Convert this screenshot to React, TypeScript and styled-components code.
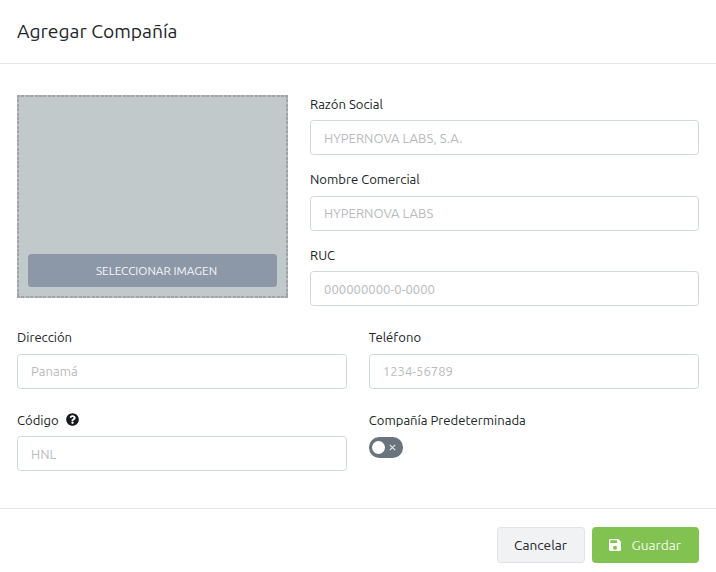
import React from "react";
import styled, { createGlobalStyle } from "styled-components";

const GlobalStyle = createGlobalStyle`
  *, *::before, *::after { box-sizing: border-box; }
  body {
    margin: 0;
    background: #fff;
    color: #212529;
    font-family: Ubuntu, "Noto Sans", sans-serif;
    font-size: 13.1px;
  }
  button, input { font: inherit; }
`;

const Dialog = styled.form`
  display: flex;
  flex-direction: column;
  height: 572px;
  overflow: hidden;
`;

const Header = styled.header`
  height: 64px;
  padding: 19px 17px 0;
  border-bottom: 1px solid #e6e7e8;
`;

const Title = styled.h1`
  margin: 0;
  font-size: 19.25px;
  font-weight: 400;
  line-height: 24px;
`;

const Body = styled.main`
  flex: 1;
  padding: 30.7px 17.5px 0 17px;
`;

const TopSection = styled.section`
  display: grid;
  grid-template-columns: 271px 1fr;
  column-gap: 22px;
`;

const FieldStack = styled.div`
  display: grid;
  row-gap: 15px;
`;

const FieldGrid = styled.section`
  display: grid;
  grid-template-columns: 1fr 1fr;
  gap: 21.9px 22px;
  margin-top: 22.2px;
`;

const dashX = "repeating-linear-gradient(90deg, #a0a5a7 0 3px, #bbc1c3 3px 4.4px)";
const dashY = "repeating-linear-gradient(180deg, #a0a5a7 0 3px, #bbc1c3 3px 4.4px)";

const ImageDrop = styled.div`
  display: flex;
  align-items: flex-end;
  height: 203px;
  padding: 11px;
  background:
    ${dashX} top / 100% 2px no-repeat,
    ${dashX} bottom / 100% 2px no-repeat,
    ${dashY} left / 2px 100% no-repeat,
    ${dashY} right / 2px 100% no-repeat,
    #c2c9cb;
`;

const SelectImage = styled.button`
  flex: 1;
  height: 33px;
  padding: 0 0 0 8px;
  border: 0;
  border-radius: 3.5px;
  background: #8c97a8;
  color: #f5f7f9;
  font-size: 11.75px;
`;

const FieldBox = styled.div`
  display: flex;
  flex-direction: column;
  gap: 7.5px;
`;

const Label = styled.label`
  display: flex;
  align-items: center;
  gap: 7px;
  height: 18px;
  line-height: 18px;
`;

const Input = styled.input`
  width: 100%;
  height: 35px;
  padding: 0 13px;
  border: 1px solid #d0d9da;
  border-radius: 3.5px;
  background: #fff;
  color: #212529;
  outline: 0;

  &::placeholder { color: #b9bbbc; opacity: 1; }
`;

const Switch = styled.button`
  display: flex;
  align-items: center;
  gap: 4px;
  width: 34.5px;
  height: 20.5px;
  margin-top: 1px;
  padding: 0 3px;
  border: 0;
  border-radius: 10.25px;
  background: #69747e;
`;

const Knob = styled.span`
  width: 13px;
  height: 13px;
  border-radius: 50%;
  background: #fff;
`;

const Footer = styled.footer`
  display: flex;
  justify-content: flex-end;
  gap: 7px;
  height: 64px;
  padding: 18px 17.5px 0;
  border-top: 1px solid #e8e9ea;
`;

const Action = styled.button<{ $primary?: boolean }>`
  display: flex;
  align-items: center;
  justify-content: center;
  gap: 10.5px;
  width: ${(p) => (p.$primary ? 107 : 88)}px;
  height: 36px;
  padding: 0;
  border: 1px solid ${(p) => (p.$primary ? "#82c250" : "#e1e3e6")};
  border-radius: 3.5px;
  background: ${(p) => (p.$primary ? "#82c250" : "#f1f2f4")};
  color: ${(p) => (p.$primary ? "#f4faef" : "#212529")};
  font-size: 13.7px;
`;

const HelpIcon = () => (
  <svg width="13" height="13" viewBox="0 0 512 512" fill="#17191c" aria-hidden="true">
    <path d="M504 256c0 136.997-111.043 248-248 248S8 392.997 8 256C8 119.083 119.043 8 256 8s248 111.083 248 248zM262.655 90c-54.497 0-89.255 22.957-116.549 63.758-3.536 5.286-2.353 12.415 2.715 16.258l34.699 26.31c5.205 3.947 12.621 3.008 16.665-2.122 17.864-22.658 30.113-35.797 57.303-35.797 20.429 0 45.698 13.148 45.698 32.958 0 14.976-12.363 22.667-32.534 33.976C247.128 238.528 216 254.941 216 296v4c0 6.627 5.373 12 12 12h56c6.627 0 12-5.373 12-12v-1.333c0-28.462 83.186-29.647 83.186-106.667 0-58.002-60.165-102-116.531-102zM256 338c-25.365 0-46 20.635-46 46 0 25.364 20.635 46 46 46s46-20.636 46-46c0-25.365-20.635-46-46-46z" />
  </svg>
);

const SaveIcon = () => (
  <svg width="12" height="12" viewBox="3 3 18 18" fill="#fff" aria-hidden="true">
    <path d="M17 3H5a2 2 0 0 0-2 2v14a2 2 0 0 0 2 2h14a2 2 0 0 0 2-2V7l-4-4zm-5 16a3 3 0 1 1 0-6 3 3 0 0 1 0 6zm3-10H5V5h10v4z" />
  </svg>
);

const CrossIcon = () => (
  <svg width="7" height="7" viewBox="0 0 7 7" stroke="#e4e8eb" strokeWidth="1.15" aria-hidden="true">
    <path d="M.8.8l5.4 5.4M6.2.8L.8 6.2" />
  </svg>
);

interface FieldProps {
  id: string;
  label: string;
  placeholder: string;
  help?: boolean;
}

const Field = ({ id, label, placeholder, help }: FieldProps) => (
  <FieldBox>
    <Label htmlFor={id}>
      {label}
      {help && <HelpIcon />}
    </Label>
    <Input id={id} placeholder={placeholder} />
  </FieldBox>
);

export default function App() {
  return (
    <>
      <GlobalStyle />
      <Dialog>
        <Header>
          <Title>Agregar Compañía</Title>
        </Header>
        <Body>
          <TopSection>
            <ImageDrop>
              <SelectImage type="button">SELECCIONAR IMAGEN</SelectImage>
            </ImageDrop>
            <FieldStack>
              <Field id="razon" label="Razón Social" placeholder="HYPERNOVA LABS, S.A." />
              <Field id="nombre" label="Nombre Comercial" placeholder="HYPERNOVA LABS" />
              <Field id="ruc" label="RUC" placeholder="000000000-0-0000" />
            </FieldStack>
          </TopSection>
          <FieldGrid>
            <Field id="direccion" label="Dirección" placeholder="Panamá" />
            <Field id="telefono" label="Teléfono" placeholder="1234-56789" />
            <Field id="codigo" label="Código" placeholder="HNL" help />
            <FieldBox>
              <Label as="span">Compañía Predeterminada</Label>
              <Switch type="button" role="switch" aria-checked={false} aria-label="Compañía Predeterminada">
                <Knob />
                <CrossIcon />
              </Switch>
            </FieldBox>
          </FieldGrid>
        </Body>
        <Footer>
          <Action type="button">Cancelar</Action>
          <Action type="button" $primary>
            <SaveIcon />
            Guardar
          </Action>
        </Footer>
      </Dialog>
    </>
  );
}
